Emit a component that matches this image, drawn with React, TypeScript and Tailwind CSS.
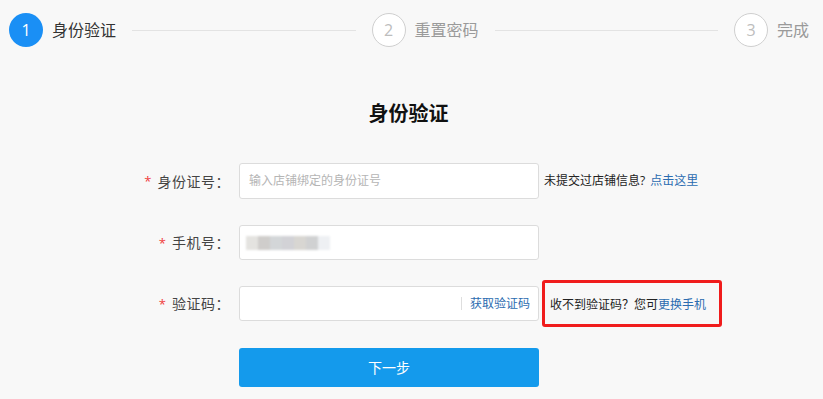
import React from "react";

const font = { fontFamily: '"Open Sans", "Noto Sans CJK SC", sans-serif' };

function Step({ n, label, active }: { n: number; label: string; active?: boolean }) {
  return (
    <div className="flex items-center shrink-0">
      <div
        className={
          active
            ? "w-[34px] h-[34px] rounded-full bg-[#1a8ff5] text-white flex items-center justify-center text-[16px]"
            : "w-[34px] h-[34px] rounded-full bg-white border border-[#cfcfcf] text-[#bdbdbd] flex items-center justify-center text-[16px]"
        }
      >
        {n}
      </div>
      <span className={active ? "ml-[9px] text-[16px] text-[#333]" : "ml-[9px] text-[16px] text-[#9a9a9a]"}>{label}</span>
    </div>
  );
}

function Label({ text }: { text: string }) {
  return (
    <div className="w-[239px] shrink-0 flex justify-end items-center pr-[9px] text-[14px] text-[#444]">
      <span className="text-[#f03c3c] text-[13px] mr-[6px] relative top-[1px]">*</span>
      <span className="tracking-[0.5px]">{text}：</span>
    </div>
  );
}

export default function App() {
  return (
    <div className="w-full h-[399px] bg-[#f8f8f8] overflow-hidden" style={font}>
      <div className="flex items-center pl-[9px] pr-[14px] pt-[13px]">
        <Step n={1} label="身份验证" active />
        <div className="flex-1 h-px bg-[#e3e3e3] mx-[16px]" />
        <Step n={2} label="重置密码" />
        <div className="flex-1 h-px bg-[#e3e3e3] mx-[16px]" />
        <Step n={3} label="完成" />
      </div>

      <div className="flex justify-center mt-[53px]">
        <div className="text-[20px] font-bold text-[#111] leading-[28px] mr-[6px]">身份验证</div>
      </div>

      <div className="mt-[35px] flex flex-col">
        <div className="flex items-center h-[36px]">
          <Label text="身份证号" />
          <div className="w-[300px] h-[36px] bg-white border border-[#dcdcdc] rounded-[3px] flex items-center pl-[9px] text-[12px] text-[#b5b5b5]">
            输入店铺绑定的身份证号
          </div>
          <div className="ml-[5px] text-[12px] text-[#222]">
            未提交过店铺信息? <span className="text-[#2b6cb0] ml-[2px]">点击这里</span>
          </div>
        </div>

        <div className="flex items-center h-[35px] mt-[26px]">
          <Label text="手机号" />
          <div className="w-[300px] h-[35px] bg-white border border-[#dcdcdc] rounded-[3px] flex items-center pl-[6px]">
            <div className="flex h-[14px] blur-[1px]">
              <div className="w-[12px] bg-[#e4e3e0]" />
              <div className="w-[12px] bg-[#cfcdcb]" />
              <div className="w-[12px] bg-[#d3d6d8]" />
              <div className="w-[12px] bg-[#d2d2d6]" />
              <div className="w-[12px] bg-[#d8d6d2]" />
              <div className="w-[12px] bg-[#d0d1d2]" />
              <div className="w-[12px] bg-[#eef0f3]" />
            </div>
          </div>
        </div>

        <div className="flex items-center h-[35px] mt-[26px]">
          <Label text="验证码" />
          <div className="w-[300px] h-[35px] bg-white border border-[#dcdcdc] rounded-[3px] flex items-center justify-end pr-[8px]">
            <div className="w-px h-[13px] bg-[#dedede] mr-[8px]" />
            <span className="text-[12px] text-[#2b6cb0]">获取验证码</span>
          </div>
          <div className="ml-[3px] w-[180px] h-[47px] border-[3px] border-[#f01c1c] rounded-[3px] flex items-center pl-[5px] pt-[2px] text-[12px] text-[#222]">
            收不到验证码？您可<span className="text-[#2b6cb0]">更换手机</span>
          </div>
        </div>

        <div className="flex mt-[27px]">
          <div className="w-[239px] shrink-0" />
          <button className="w-[300px] h-[39px] rounded-[3px] bg-[#149aec] text-white text-[14px]">下一步</button>
        </div>
      </div>
    </div>
  );
}
